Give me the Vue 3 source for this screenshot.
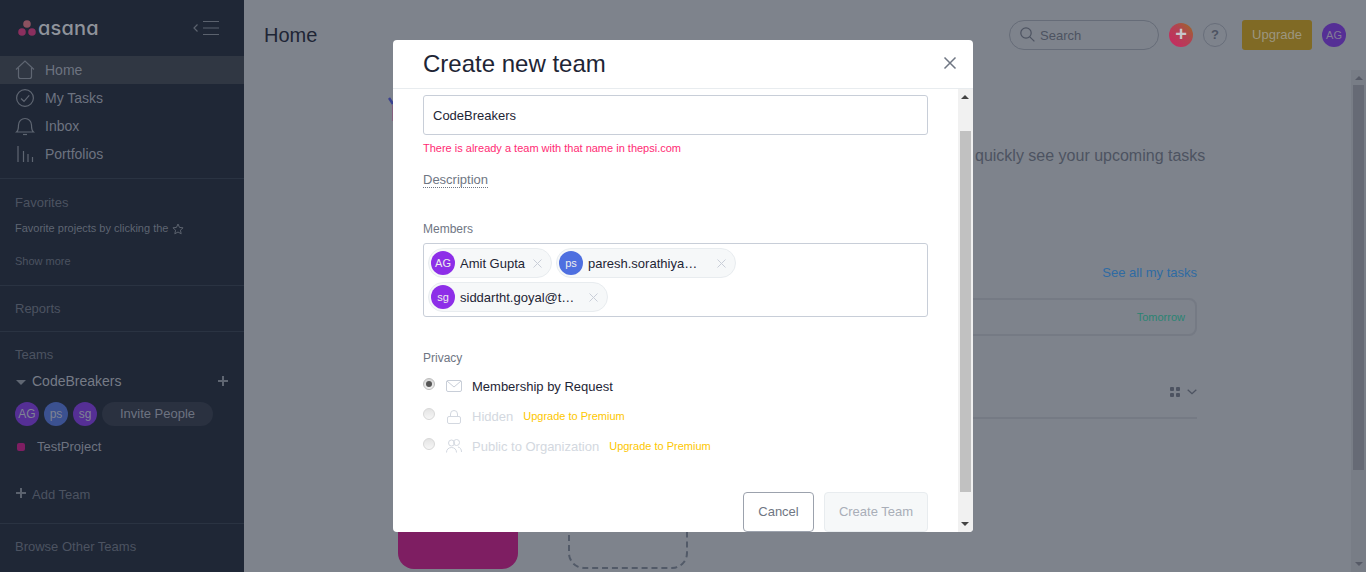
<script setup>
const navItems = [
  { label: 'Home', icon: 'home', active: true },
  { label: 'My Tasks', icon: 'check' },
  { label: 'Inbox', icon: 'bell' },
  { label: 'Portfolios', icon: 'bars' }
]
const sideAvatars = [
  { text: 'AG', tone: 'purple' },
  { text: 'ps', tone: 'blue' },
  { text: 'sg', tone: 'purple' }
]
const chipRows = [
  [
    { text: 'AG', name: 'Amit Gupta', tone: 'purple', width: 66, gap: 7 },
    { text: 'ps', name: 'paresh.sorathiya@thepsi.com', tone: 'blue', width: 110, gap: 19 }
  ],
  [{ text: 'sg', name: 'siddartht.goyal@thepsi.com', tone: 'purple', width: 115, gap: 14 }]
]
</script>

<template>
  <div class="app">
    <aside class="sidebar">
      <div class="brand">
        <svg class="logo-mark" width="18" height="16" viewBox="0 0 18 16">
          <circle cx="9" cy="4" r="3.8" fill="#8c5260" />
          <circle cx="4" cy="12" r="3.8" fill="#8a2f5e" />
          <circle cx="14" cy="12" r="3.8" fill="#8a2f5e" />
        </svg>
        <span class="wordmark">asana</span>
        <svg class="collapse" width="26" height="14" viewBox="0 0 26 14" fill="none" stroke="#5b626e">
          <path d="M4.5 3.5 1 7l3.500 3.500" stroke-width="1.200" />
          <path d="M10 .5h16M10 7h16M10 13.500h16" />
        </svg>
      </div>
      <nav class="nav">
        <div v-for="item in navItems" :key="item.label" class="nav-row" :class="{ active: item.active }">
          <svg width="20" height="20" viewBox="0 0 20 20" fill="none" stroke="#5f6672" stroke-width="1.200">
            <template v-if="item.icon === 'home'">
              <path d="M1 9.500 10 1l9 8.500" />
              <path d="M3.500 8v8.500a2 2 0 0 0 2 2h9a2 2 0 0 0 2-2V8" />
            </template>
            <template v-else-if="item.icon === 'check'">
              <circle cx="10" cy="10" r="8.400" />
              <path d="m6 10.500 3 2.800 5.200-6" />
            </template>
            <template v-else-if="item.icon === 'bell'">
              <path d="M1.500 16c2-1.500 2-3 2-7a6.500 6.500 0 0 1 13 0c0 4 0 5.500 2 7z" />
              <path d="M8 18.500h4" />
            </template>
            <template v-else>
              <path d="M3 2v16M8.500 7v11M13 10v8M17.500 13v5" />
            </template>
          </svg>
          <span>{{ item.label }}</span>
        </div>
      </nav>

      <section class="side-section favorites">
        <div class="side-title">Favorites</div>
        <div class="fav-hint">
          Favorite projects by clicking the
          <svg width="12" height="12" viewBox="0 0 12 12" fill="none" stroke="#5b626e">
            <path d="m6 1 1.500 3.400 3.600.4-2.700 2.400.8 3.600L6 9l-3.200 1.800.8-3.600L.9 4.800l3.600-.4z" />
          </svg>
        </div>
        <div class="show-more">Show more</div>
      </section>

      <section class="side-section reports">
        <div class="side-title">Reports</div>
      </section>

      <section class="side-section teams">
        <div class="side-title">Teams</div>
        <div class="team-row">
          <span class="caret"></span>
          <span class="team-name">CodeBreakers</span>
          <svg class="team-plus" width="10" height="10" viewBox="0 0 10 10" stroke="#5f6672" stroke-width="2">
            <path d="M5 0v10M0 5h10" />
          </svg>
        </div>
        <div class="team-people">
          <span v-for="a in sideAvatars" :key="a.text" class="side-avatar" :class="a.tone">{{ a.text }}</span>
          <span class="invite">Invite People</span>
        </div>
        <div class="project-row">
          <span class="project-dot"></span>
          <span>TestProject</span>
        </div>
        <div class="add-team">
          <svg width="10" height="10" viewBox="0 0 10 10" stroke="#5b626e" stroke-width="2">
            <path d="M5 0v10M0 5h10" />
          </svg>
          Add Team
        </div>
      </section>

      <section class="side-section browse">
        <div class="side-title">Browse Other Teams</div>
      </section>
    </aside>

    <main class="main">
      <header class="topbar">
        <h1 class="page-title">Home</h1>
        <div class="search">
          <svg width="15" height="15" viewBox="0 0 15 15" fill="none" stroke="#4d5361" stroke-width="1.200">
            <circle cx="6" cy="6" r="5.200" />
            <path d="m9.800 9.800 4.600 4.600" />
          </svg>
          <span>Search</span>
        </div>
        <span class="quick-add">+</span>
        <span class="help">?</span>
        <span class="upgrade">Upgrade</span>
        <span class="top-avatar">AG</span>
      </header>

      <div class="page">
        <div class="content">
          <div class="hero">
            <svg class="hero-mark" width="20" height="26" viewBox="0 0 20 26" fill="none">
              <path d="M1 1 5 7" stroke="#3b4290" stroke-width="2.500" />
              <path d="M4.500 8v16" stroke="#85607f" />
            </svg>
            <p class="hero-text">quickly see your upcoming tasks</p>
          </div>
          <div class="see-all">See all my tasks</div>
          <div class="task-card"><span>Tomorrow</span></div>
          <div class="projects-head">
            <span class="grid-icon"><i></i><i></i><i></i><i></i></span>
            <svg width="10" height="6" viewBox="0 0 10 6" fill="none" stroke="#4d5361" stroke-width="1.300">
              <path d="m.7.700 4.300 4 4.300-4" />
            </svg>
          </div>
          <div class="tiles">
            <div class="tile"></div>
            <div class="tile-new"></div>
          </div>
        </div>
        <div class="page-scroll">
          <span class="arrow up dim"></span>
          <span class="thumb"></span>
          <span class="arrow down dim"></span>
        </div>
      </div>
    </main>

    <div class="modal">
      <div class="modal-head">
        <h2>Create new team</h2>
        <svg width="14" height="14" viewBox="0 0 14 14" stroke="#6f7683" stroke-width="1.500">
          <path d="m1.500 1.500 11 11M12.500 1.500l-11 11" />
        </svg>
      </div>
      <div class="modal-main">
        <div class="modal-body">
          <div class="name-input">CodeBreakers</div>
          <div class="error">There is already a team with that name in thepsi.com</div>
          <div class="description"><span>Description</span></div>

          <div class="label members-label">Members</div>
          <div class="members-box">
            <div v-for="(row, i) in chipRows" :key="i" class="chip-row">
              <div v-for="c in row" :key="c.text" class="chip">
                <span class="chip-avatar" :class="c.tone">{{ c.text }}</span>
                <span class="chip-name" :style="{ width: c.width + 'px' }">{{ c.name }}</span>
                <svg :style="{ marginLeft: c.gap + 'px' }" width="9" height="9" viewBox="0 0 9 9" stroke="#c9ced8">
                  <path d="m.5.500 8 8M8.500.500l-8 8" />
                </svg>
              </div>
            </div>
          </div>

          <div class="label privacy-label">Privacy</div>
          <div class="privacy-row">
            <span class="radio checked"></span>
            <svg class="privacy-icon" width="16" height="12" viewBox="0 0 16 12" fill="none" stroke="#c8ced8">
              <rect x=".5" y=".5" width="15" height="11" rx="1.500" />
              <path d="m1 1 7 6 7-6" />
            </svg>
            <span class="privacy-text">Membership by Request</span>
          </div>
          <div class="privacy-row off">
            <span class="radio"></span>
            <svg class="privacy-icon" width="16" height="15" viewBox="0 0 16 15" fill="none" stroke="#d3d8e0">
              <rect x="1.500" y="7.500" width="13" height="7" rx="1.500" />
              <path d="M4.500 7.500V5a3.500 3.500 0 0 1 7 0v2.500" />
            </svg>
            <span class="privacy-text">Hidden</span>
            <span class="premium">Upgrade to Premium</span>
          </div>
          <div class="privacy-row off">
            <span class="radio"></span>
            <svg class="privacy-icon" width="16" height="14" viewBox="0 0 16 14" fill="none" stroke="#d3d8e0">
              <circle cx="5.500" cy="4" r="3" />
              <circle cx="10.500" cy="3.500" r="3" />
              <path d="M.5 13.500c0-3 2-5 5-5s5 2 5 5M12 8c2 .3 3.500 2 3.500 5" />
            </svg>
            <span class="privacy-text">Public to Organization</span>
            <span class="premium">Upgrade to Premium</span>
          </div>

          <div class="actions">
            <span class="btn cancel">Cancel</span>
            <span class="btn create">Create Team</span>
          </div>
        </div>
        <div class="modal-scroll">
          <span class="arrow up"></span>
          <span class="modal-thumb"></span>
          <span class="arrow down"></span>
        </div>
      </div>
    </div>
  </div>
</template>

<style>
html, body { margin: 0; overflow: hidden; }
</style>

<style scoped>
* { box-sizing: border-box; }
.app {
  position: relative;
  display: flex;
  width: 1366px;
  height: 572px;
  overflow: hidden;
  font-family: "Liberation Sans", Arial, sans-serif;
  background: #7e838c;
}

/* Sidebar */
.sidebar {
  width: 244px;
  flex: none;
  background: #1f2736;
  color: #6d7380;
  font-size: 13px;
}
.brand {
  display: flex;
  align-items: center;
  height: 56px;
  padding: 0 25px 0 18px;
}
.logo-mark { margin-right: 2px; }
.wordmark {
  font-family: Inter, sans-serif;
  font-feature-settings: "cv11";
  font-size: 20px;
  letter-spacing: .2px;
  font-weight: 500;
  color: #8f939b;
  line-height: 1;
}
.collapse { margin-left: auto; }
.nav { padding-bottom: 10px; border-bottom: 1px solid #2a3342; height: 123px; }
.nav-row {
  display: flex;
  align-items: center;
  height: 28px;
  padding-left: 15px;
  gap: 10px;
  font-size: 14px;
}
.nav-row.active { background: #303743; }
.side-section { border-bottom: 1px solid #2a3342; padding-left: 15px; }
.side-title { font-size: 13px; line-height: 15px; color: #4c5361; }
.favorites { height: 107px; padding-top: 16px; }
.fav-hint {
  display: flex;
  align-items: center;
  gap: 4px;
  margin-top: 10px;
  height: 15px;
  font-size: 11px;
  color: #5e6572;
}
.fav-hint svg { margin-top: 2px; }
.show-more { margin-top: 20px; font-size: 11px; color: #4c5361; line-height: 13px; }
.reports { height: 46px; padding-top: 15px; }
.teams { height: 192px; padding-top: 15px; padding-right: 16px; }
.team-row { display: flex; align-items: center; height: 20px; margin-top: 9px; }
.caret {
  width: 0;
  height: 0;
  margin: 2px 6px 0 1px;
  border: 5px solid transparent;
  border-top: 5px solid #5f6672;
  border-bottom: 0;
}
.team-name { font-size: 14px; color: #767b86; }
.team-plus { margin-left: auto; }
.team-people { display: flex; align-items: center; gap: 5px; margin-top: 11px; }
.side-avatar {
  width: 24px;
  height: 24px;
  border-radius: 50%;
  font-size: 12px;
  line-height: 24px;
  text-align: center;
  color: #7f8493;
}
.side-avatar.purple { background: #552f95; }
.side-avatar.blue { background: #3b5190; }
.invite {
  width: 111px;
  height: 24px;
  border-radius: 12px;
  background: #2a3140;
  font-size: 13px;
  line-height: 24px;
  text-align: center;
  color: #6d7380;
}
.project-row {
  display: flex;
  align-items: center;
  margin-top: 12px;
  height: 16px;
  color: #6d7380;
  font-size: 13px;
}
.project-dot {
  width: 8px;
  height: 8px;
  margin: 1px 12px 0 2px;
  border-radius: 2px;
  background: #7e1e62;
}
.add-team {
  display: flex;
  align-items: center;
  gap: 7px;
  margin-top: 32px;
  height: 16px;
  color: #4c5361;
}
.add-team svg { margin-top: -2px; margin-left: 1px; margin-right: -1px; }
.browse { border-bottom: 0; padding-top: 15px; }

/* Main */
.main { flex: 1; min-width: 0; display: flex; flex-direction: column; }
.topbar { display: flex; align-items: center; height: 70px; padding: 0 20px; }
.page-title { margin: 0 auto 0 0; font-size: 20px; font-weight: 400; color: #1e2535; }
.search {
  display: flex;
  align-items: center;
  gap: 5px;
  width: 150px;
  height: 30px;
  padding-left: 10px;
  border: 1px solid #666c78;
  border-radius: 15px;
  font-size: 13px;
  color: #4d5361;
}
.search svg { margin-top: -2px; }
.quick-add {
  width: 24px;
  height: 24px;
  margin-left: 10px;
  border-radius: 50%;
  background: linear-gradient(45deg, #c2305f 20%, #b04550 60%, #9a6d20);
  color: #c6c6ca;
  font-size: 20px;
  font-weight: 700;
  line-height: 23px;
  text-align: center;
}
.help {
  width: 24px;
  height: 24px;
  margin-left: 10px;
  border: 1px solid #686e7a;
  border-radius: 50%;
  font-size: 13px;
  font-weight: 700;
  line-height: 22px;
  text-align: center;
  color: #4d5361;
}
.upgrade {
  width: 70px;
  height: 30px;
  margin-left: 15px;
  border-radius: 3px;
  background: #806a25;
  color: #9c9680;
  font-size: 13px;
  line-height: 29px;
  text-align: center;
}
.top-avatar {
  width: 24px;
  height: 24px;
  margin-left: 10px;
  border-radius: 50%;
  background: #552f95;
  color: #837d96;
  font-size: 11px;
  line-height: 24px;
  text-align: center;
}
.page { flex: 1; min-height: 0; display: flex; }
.content { flex: 1; min-width: 0; padding: 27px 0 0 144px; overflow: hidden; }
.hero { position: relative; width: 809px; height: 169px; }
.hero-mark { display: block; }
.hero-text {
  margin: 0 0 0 587px;
  padding-top: 24px;
  font-size: 16px;
  line-height: 18px;
  white-space: nowrap;
  color: #4d5361;
}
.see-all {
  width: 809px;
  margin-top: -1px;
  text-align: right;
  font-size: 13px;
  line-height: 15px;
  color: #2f6ba3;
}
.task-card {
  display: flex;
  align-items: center;
  justify-content: flex-end;
  width: 799px;
  height: 38px;
  margin: 18px 0 0 10px;
  padding-right: 10px;
  border: 2px solid #757a84;
  border-radius: 8px;
  font-size: 11px;
  color: #2b8473;
}
.projects-head {
  display: flex;
  align-items: center;
  justify-content: flex-end;
  gap: 7px;
  width: 799px;
  height: 36px;
  margin: 47px 0 0 10px;
  border-bottom: 2px solid #757a84;
  padding-bottom: 16px;
}
.grid-icon { display: grid; grid-template-columns: 4px 4px; gap: 2px; }
.grid-icon i { width: 4px; height: 4px; border-radius: 1px; background: #4d5361; }
.tiles { display: flex; gap: 50px; margin: 30px 0 0 10px; }
.tile { width: 120px; height: 120px; border-radius: 16px; background: #7e1e62; }
.tile-new { width: 120px; height: 120px; border-radius: 16px; border: 2px dashed #525a68; }
.page-scroll {
  position: relative;
  width: 15px;
  flex: none;
  background: #787d86;
}
.thumb { position: absolute; left: 2px; right: 2px; top: 15px; height: 385px; background: #666a75; }
.arrow {
  position: absolute;
  left: 3px;
  width: 0;
  height: 0;
  border: 4px solid transparent;
  border-width: 0 4px 4px;
  border-bottom-color: #444;
}
.arrow.dim { border-bottom-color: #565a66; left: 4px; }
.arrow.up { top: 6px; }
.arrow.down {
  bottom: 6px;
  border-width: 4px 4px 0;
  border-top-color: #444;
  border-bottom-color: transparent;
}
.arrow.down.dim { border-top-color: #565a66; }

/* Modal */
.modal {
  position: absolute;
  left: 393px;
  top: 40px;
  width: 580px;
  height: 492px;
  display: flex;
  flex-direction: column;
  overflow: hidden;
  background: #fff;
  border-radius: 4px;
  color: #1e2535;
}
.modal-head {
  display: flex;
  align-items: center;
  justify-content: space-between;
  height: 49px;
  flex: none;
  padding: 0 16px 0 30px;
  border-bottom: 1px solid #e8ecef;
}
.modal-head h2 { margin: 0; font-size: 24px; font-weight: 400; line-height: 48px; }
.modal-head svg { margin-top: -2px; }
.modal-main { flex: 1; min-height: 0; display: flex; }
.modal-body { flex: 1; min-width: 0; padding: 6px 30px 0; overflow: hidden; }
.modal-scroll { position: relative; width: 15px; flex: none; background: #f1f1f1; }
.modal-thumb { position: absolute; left: 2px; right: 2px; top: 42px; height: 361px; background: #c1c1c1; }
.name-input {
  height: 40px;
  padding: 1px 9px 0;
  border: 1px solid #c8ced8;
  border-radius: 3px;
  font-size: 13px;
  line-height: 38px;
}
.error { margin-top: 7px; font-size: 11px; line-height: 13px; color: #ff2b74; }
.description { margin-top: 17px; height: 17px; line-height: 15px; font-size: 13px; color: #6f7683; }
.description span { border-bottom: 1px dotted #6f7683; display: inline-block; height: 16px; }
.label { font-size: 12px; line-height: 14px; color: #6f7683; }
.members-label { margin-top: 33px; }
.members-box {
  height: 74px;
  margin-top: 7px;
  padding: 4px;
  border: 1px solid #c8ced8;
  border-radius: 3px;
}
.chip-row { display: flex; gap: 4px; margin-bottom: 4px; }
.chip {
  display: flex;
  flex: none;
  align-items: center;
  height: 30px;
  padding: 0 9px 0 2px;
  border: 1px solid #e8ecef;
  border-radius: 15px;
  background: #f6f8f9;
  font-size: 13px;
}
.chip-avatar {
  width: 24px;
  height: 24px;
  margin-right: 5px;
  border-radius: 50%;
  font-size: 11px;
  line-height: 24px;
  text-align: center;
  color: #eee;
  flex: none;
}
.chip-avatar.purple { background: #8d2ee8; }
.chip-avatar.blue { background: #4e6fe0; }
.chip-name { flex: none; overflow: hidden; white-space: nowrap; text-overflow: ellipsis; }
.privacy-label { margin-top: 34px; }
.privacy-row {
  display: flex;
  align-items: center;
  height: 30px;
  font-size: 13px;
}
.privacy-label + .privacy-row { margin-top: 6px; }
.radio {
  position: relative;
  width: 12px;
  height: 12px;
  flex: none;
  margin: -5px 11px 0 0;
  border: 1px solid #bdbdbd;
  border-radius: 50%;
  background: linear-gradient(#d6d6d6, #f1f1f1);
}
.off .radio { border-color: #d8d8d8; background: linear-gradient(#e4e4e4, #f6f6f6); }
.radio.checked::after {
  content: "";
  position: absolute;
  left: 2px;
  top: 2px;
  width: 6px;
  height: 6px;
  border-radius: 50%;
  background: #555;
}
.privacy-icon { flex: none; width: 16px; margin-right: 10px; }
.privacy-text { white-space: nowrap; }
.off .privacy-text { color: #d3d8e0; }
.premium { margin-left: 10px; font-size: 11px; color: #fdc700; }
.actions {
  display: flex;
  justify-content: flex-end;
  gap: 10px;
  margin-top: 31px;
}
.btn {
  height: 40px;
  border-radius: 4px;
  font-size: 13px;
  line-height: 38px;
  text-align: center;
}
.cancel { width: 71px; border: 1px solid #9ca2ad; color: #6f7683; }
.create { width: 104px; border: 1px solid #e8ecef; background: #f6f8f9; color: #a9aeb8; }
</style>
